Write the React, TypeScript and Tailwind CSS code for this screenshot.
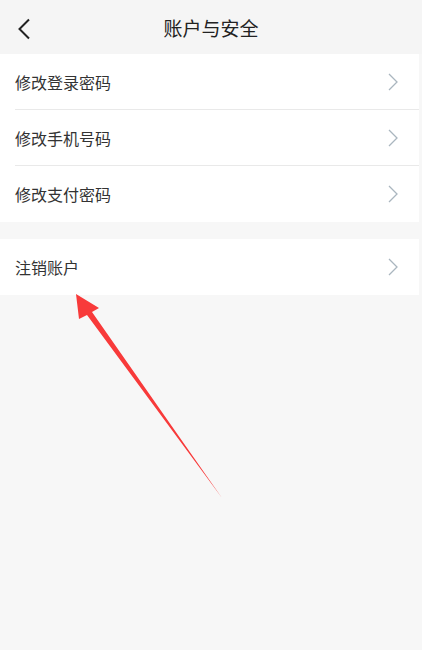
import React from "react";

const groups = [["修改登录密码", "修改手机号码", "修改支付密码"], ["注销账户"]];

const Chevron = () => (
  <svg width="10" height="18" viewBox="0 0 10 18" fill="none">
    <path d="M1 1l8 8-8 8" stroke="#aab6bf" strokeWidth="1.3" />
  </svg>
);

const App = () => {
  return (
    <div
      className="relative w-[422px] h-[650px] bg-[#f7f7f7] overflow-hidden"
      style={{ fontFamily: '"Noto Sans CJK SC", "Noto Sans", sans-serif' }}
    >
      {/* Header */}
      <div className="relative h-[54px] flex items-center justify-center bg-[#f5f5f5]">
        <button className="absolute left-[17px] top-[18px]">
          <svg width="14" height="22" viewBox="0 0 14 22" fill="none">
            <path d="M12 1.5L2.5 11l9.5 9.5" stroke="#222" strokeWidth="2" />
          </svg>
        </button>
        <h1 className="text-[19px] text-[#222] leading-none">账户与安全</h1>
      </div>

      {groups.map((items, gi) => (
        <div key={gi} className={`bg-white mr-[3px] ${gi > 0 ? "mt-[17px]" : ""}`}>
          {items.map((label, i) => (
            <div key={label} className="pl-[15px]">
              <div
                className={`h-[56px] flex items-center justify-between pr-[21px] ${
                  i < items.length - 1 ? "border-b border-[#e9e9e9]" : ""
                }`}
              >
                <span className="text-[16px] text-[#333] leading-none">{label}</span>
                <Chevron />
              </div>
            </div>
          ))}
        </div>
      ))}

      {/* Annotation arrow */}
      <svg className="absolute left-0 top-0 pointer-events-none" width="422" height="650">
        <polygon
          points="76,294 99,308 92,312 222,498 87,315 79,319"
          fill="#f83a3a"
        />
      </svg>
    </div>
  );
};

export default App;
